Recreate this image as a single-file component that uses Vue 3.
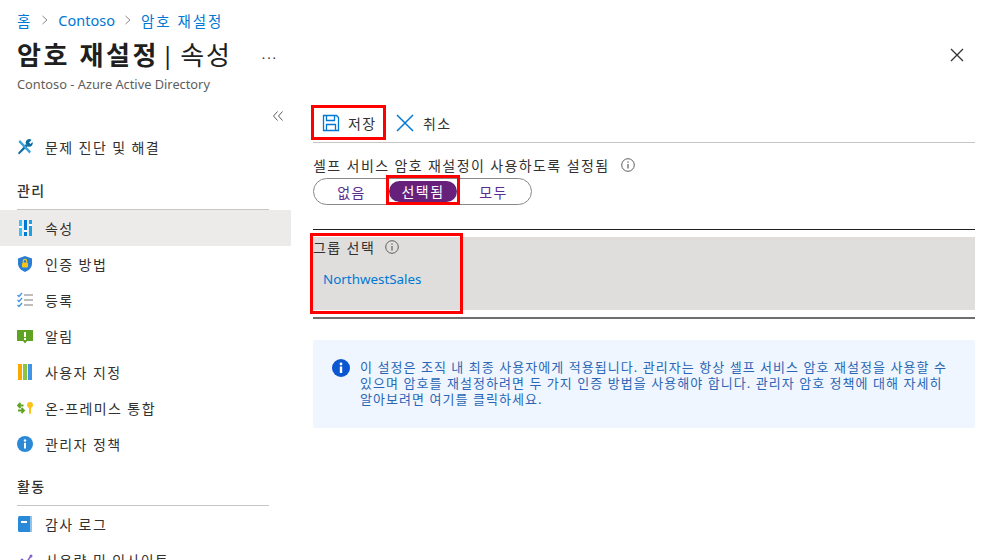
<script setup>
const crumbs = [
  { label: "Contoso", latin: true },
  { label: "암호 재설정" },
];
const manage = [
  { label: "속성", icon: "props", active: true },
  { label: "인증 방법", icon: "shield" },
  { label: "등록", icon: "check" },
  { label: "알림", icon: "alert" },
  { label: "사용자 지정", icon: "books" },
  { label: "온-프레미스 통합", icon: "sync" },
  { label: "관리자 정책", icon: "info" },
];
const activity = [
  { label: "감사 로그", icon: "log" },
  { label: "사용량 및 인사이트", icon: "chart" },
];
</script>

<template>
  <div class="page">
    <header class="head">
      <nav class="crumbs">
        <a>홈</a>
        <template v-for="c in crumbs" :key="c.label">
          <svg class="chev" width="8" height="10" viewBox="0 0 8 10"><path d="M1.5 1l4.5 4-4.500 4" fill="none" stroke="#8a8886" /></svg>
          <a :class="{ latin: c.latin }">{{ c.label }}</a>
        </template>
      </nav>
      <div class="title-row">
        <h1><b>암호 재설정</b><span class="pipe">|</span><span>속성</span></h1>
        <span class="more">...</span>
        <svg class="close" width="14" height="14" viewBox="0 0 14 14"><path d="M1 1l12 12M13 1L1 13" stroke="#323130" stroke-width="1.3" /></svg>
      </div>
      <div class="tenant">Contoso - Azure Active Directory</div>
    </header>

    <div class="body">
      <aside class="side">
        <div class="collapse">
          <svg width="10" height="10" viewBox="0 0 10 10"><path d="M4.500.5L.5 5l4 4.500M9.500.5L5.500 5l4 4.500" fill="none" stroke="#605e5c" /></svg>
        </div>
        <div class="item">
          <svg class="ic" width="16" height="16" viewBox="0 0 16 16">
            <path d="M1 14l8-9 2 2-9 8.500z" fill="#0b6a9f" />
            <path d="M3 1l11 11.500-1.500 2L1.500 3z" fill="#3aa0e0" />
            <path d="M9 5a3.500 3.500 0 0 1 5.500-4L12 3.500 13.500 5 15.500 3A3.500 3.500 0 0 1 11 7.500z" fill="#0b6a9f" />
          </svg>
          <span>문제 진단 및 해결</span>
        </div>
        <h2>관리</h2>
        <div v-for="m in manage" :key="m.label" class="item" :class="{ active: m.active }">
          <svg v-if="m.icon === 'props'" class="ic" width="16" height="16" viewBox="0 0 16 16">
            <rect x="2" y="0" width="3" height="16" fill="#32c5f4" /><rect x="2" y="6" width="3" height="2" fill="#fff" />
            <rect x="7" y="0" width="3" height="16" fill="#0078d4" /><rect x="7" y="10" width="3" height="2" fill="#fff" />
            <rect x="12" y="0" width="3" height="16" fill="#1e9fe0" /><rect x="12" y="4" width="3" height="2" fill="#fff" />
          </svg>
          <svg v-else-if="m.icon === 'shield'" class="ic" width="16" height="16" viewBox="0 0 16 16">
            <path d="M8 0l7 2.500v5c0 4-3 7-7 8.500-4-1.500-7-4.500-7-8.500v-5z" fill="#2a7fd5" />
            <rect x="5" y="6.500" width="6" height="5" rx="1" fill="#f5c518" />
            <path d="M6.300 6.500V5a1.700 1.700 0 0 1 3.400 0v1.500" fill="none" stroke="#f5c518" stroke-width="1.200" />
          </svg>
          <svg v-else-if="m.icon === 'check'" class="ic" width="16" height="16" viewBox="0 0 16 16">
            <path d="M.5 3l1.500 1.500L5 1M.5 8l1.500 1.500L5 6M.5 13l1.500 1.500L5 11" fill="none" stroke="#3f95e8" stroke-width="1.300" />
            <path d="M7 3h9M7 8h9M7 13h9" stroke="#a8a8a8" stroke-width="1.300" />
          </svg>
          <svg v-else-if="m.icon === 'alert'" class="ic" width="16" height="16" viewBox="0 0 16 16">
            <path d="M0 2h16v11H10l-2 2.500L6 13H0z" fill="#5ea422" />
            <rect x="7" y="4" width="2" height="5" fill="#fff" /><rect x="7" y="10" width="2" height="2" fill="#fff" />
          </svg>
          <svg v-else-if="m.icon === 'books'" class="ic" width="16" height="16" viewBox="0 0 16 16">
            <rect x="1" y="0" width="4" height="16" fill="#f8a800" />
            <rect x="6" y="0" width="4" height="16" fill="#8cc63f" />
            <rect x="11" y="0" width="4" height="16" fill="#3f95e8" />
          </svg>
          <svg v-else-if="m.icon === 'sync'" class="ic" width="16" height="16" viewBox="0 0 16 16">
            <path d="M1 5.500h5.500M3.500 3L1 5.500 3.500 8M1 10.500h6M4.500 8L7 10.500 4.500 13" fill="none" stroke="#5ea422" stroke-width="1.800" />
            <circle cx="13" cy="5" r="3" fill="#fcc419" /><path d="M12 7h2v6l-1 1.500-1-1.500z" fill="#fcc419" />
          </svg>
          <svg v-else-if="m.icon === 'info'" class="ic" width="16" height="16" viewBox="0 0 16 16">
            <circle cx="8" cy="8" r="8" fill="#2a8ad8" />
            <circle cx="8" cy="4.500" r="1.200" fill="#fff" /><rect x="7" y="6.800" width="2" height="5.700" fill="#fff" />
          </svg>
          <span>{{ m.label }}</span>
        </div>
        <h2 class="second">활동</h2>
        <div v-for="a in activity" :key="a.label" class="item">
          <svg v-if="a.icon === 'log'" class="ic" width="16" height="16" viewBox="0 0 16 16">
            <rect x="1" y="0" width="14" height="16" rx="1.500" fill="#2a8ad8" />
            <rect x="13" y="0" width="2" height="16" fill="#8dc4ee" />
            <rect x="4" y="5" width="6" height="2" fill="#fff" />
          </svg>
          <svg v-else class="ic" width="16" height="16" viewBox="0 0 16 16">
            <path d="M1 13l4-5 4 3 5-7" fill="none" stroke="#8661c5" stroke-width="1.500" />
            <circle cx="5" cy="8" r="1.500" fill="#8661c5" /><circle cx="9" cy="11" r="1.500" fill="#8661c5" /><circle cx="14" cy="4" r="1.500" fill="#8661c5" />
          </svg>
          <span>{{ a.label }}</span>
        </div>
      </aside>

      <main class="main">
        <div class="toolbar">
          <button class="tool mark-save">
            <svg width="18" height="18" viewBox="0 0 18 18">
              <path d="M1.500 1.500h13l2 2v13h-15z" fill="none" stroke="#0078d4" stroke-width="1.300" />
              <path d="M4.500 1.500v5h8v-5M4.500 16.500v-6h9v6" fill="none" stroke="#0078d4" stroke-width="1.300" />
            </svg>
            저장
          </button>
          <button class="tool cancel">
            <svg width="20" height="20" viewBox="0 0 20 20"><path d="M2 2l16 16M18 2L2 18" stroke="#0078d4" stroke-width="1.500" /></svg>
            취소
          </button>
        </div>
        <div class="field-label">
          셀프 서비스 암호 재설정이 사용하도록 설정됨
          <svg class="tip" width="14" height="14" viewBox="0 0 14 14"><circle cx="7" cy="7" r="6.300" fill="none" stroke="#605e5c" /><path d="M7 6v4.500M7 3.500v1.300" stroke="#605e5c" stroke-width="1.200" /></svg>
        </div>
        <div class="pills">
          <span class="pill">없음</span>
          <span class="pill on">선택됨</span>
          <span class="pill">모두</span>
        </div>
        <div class="group">
          <div class="group-mark">
            <div class="group-title">
              그룹 선택
              <svg class="tip" width="14" height="14" viewBox="0 0 14 14"><circle cx="7" cy="7" r="6.300" fill="none" stroke="#605e5c" /><path d="M7 6v4.500M7 3.500v1.300" stroke="#605e5c" stroke-width="1.200" /></svg>
            </div>
            <a class="group-link">NorthwestSales</a>
          </div>
        </div>
        <div class="notice">
          <svg class="notice-ic" width="18" height="18" viewBox="0 0 18 18">
            <circle cx="9" cy="9" r="9" fill="#0b57d0" />
            <circle cx="9" cy="5" r="1.400" fill="#fff" /><rect x="7.800" y="7.500" width="2.400" height="6.500" fill="#fff" />
          </svg>
          <p>이 설정은 조직 내 최종 사용자에게 적용됩니다. 관리자는 항상 셀프 서비스 암호 재설정을 사용할 수 있으며 암호를 재설정하려면 두 가지 인증 방법을 사용해야 합니다. 관리자 암호 정책에 대해 자세히 알아보려면 여기를 클릭하세요.</p>
        </div>
      </main>
    </div>
  </div>
</template>

<style>
html, body {
  background: #fff;
  overflow: hidden;
}
</style>

<style scoped>
.page {
  width: 992px;
  height: 560px;
  overflow: hidden;
  font-family: "Noto Sans", "Noto Sans CJK KR", sans-serif;
  font-size: 14px;
  letter-spacing: 1.4px;
  color: #323130;
}
.head {
  padding: 10px 0 0 17px;
  height: 100px;
  box-sizing: border-box;
}
.crumbs {
  display: flex;
  align-items: center;
  gap: 9px;
  height: 20px;
  font-size: 14.5px;
  letter-spacing: 2px;
  color: #0078d4;
}
.latin {
  letter-spacing: 0;
}
.title-row {
  display: flex;
  align-items: center;
  height: 38px;
  margin-top: 6px;
}
h1 {
  display: flex;
  align-items: center;
  margin: 0;
  font-size: 26px;
  font-weight: 400;
  line-height: 32px;
  letter-spacing: 1.8px;
  color: #201f1e;
  white-space: nowrap;
}
h1 b {
  font-weight: 700;
  letter-spacing: 2.6px;
}
.pipe {
  margin: 0 6px 0 2px;
  font-size: 24px;
  letter-spacing: 0;
}
.more {
  margin-left: 30px;
  padding-bottom: 2px;
  font-size: 13px;
  letter-spacing: 2px;
}
.close { margin-left: auto; margin-right: 28px; }
.tenant {
  font-size: 12.800px;
  line-height: 16px;
  letter-spacing: 0;
  color: #605e5c;
  margin-top: 2px;
}
.body {
  display: flex;
  height: 460px;
}
.side {
  width: 291px;
  flex: none;
}
.collapse {
  display: flex;
  justify-content: flex-end;
  box-sizing: border-box;
  height: 29px;
  padding: 11px 8px 0 0;
}
.item {
  display: flex;
  align-items: center;
  height: 36px;
  padding-left: 17px;
  gap: 12px;
  white-space: nowrap;
}
.item.active { background: #edebe9; }
.ic { flex: none; }
h2 {
  margin: 9px 22px 0 17px;
  height: 36px;
  box-sizing: border-box;
  padding-top: 8px;
  font-size: 14px;
  font-weight: 500;
  line-height: 18px;
  border-bottom: 1px solid #c8c6c4;
}
h2.second { margin-top: 8px; }
.main {
  margin-left: 22px;
  width: 662px;
  flex: none;
}
.toolbar {
  display: flex;
  align-items: center;
  height: 43px;
  padding-top: 3px;
  box-sizing: border-box;
  border-bottom: 1px solid #c8c6c4;
}
.tool {
  display: flex;
  align-items: center;
  gap: 8px;
  height: 35px;
  padding: 0;
  background: none;
  border: 0;
  font: inherit;
  letter-spacing: inherit;
  color: #323130;
}
.mark-save {
  box-sizing: border-box;
  width: 75px;
  margin-left: -2px;
  padding-left: 8px;
  border: 3px solid #f00;
  justify-content: flex-start;
}
.cancel { margin-left: 9px; }
.field-label {
  display: flex;
  align-items: center;
  gap: 11px;
  height: 18px;
  margin-top: 13px;
  white-space: nowrap;
}
.tip { flex: none; }
.pills {
  display: flex;
  align-items: center;
  box-sizing: border-box;
  height: 27px;
  width: 219px;
  margin-top: 4px;
  border: 1px solid #8a8886;
  border-radius: 14px;
}
.pill {
  flex: none;
  text-align: center;
  color: #5c2d91;
}
.pill:nth-child(1) { width: 75px; }
.pill:nth-child(2) { width: 68px; }
.pill:nth-child(3) { width: 73px; }
.pill.on {
  position: relative;
  height: 21px;
  line-height: 21px;
  background: #68217a;
  color: #fff;
  border-radius: 11px;
}
.pill.on::after {
  content: "";
  position: absolute;
  inset: -6px -3px -3px -3px;
  border: 3px solid #f00;
}
.group {
  position: relative;
  margin-top: 24px;
  height: 90px;
  box-sizing: border-box;
  border-top: 1px solid #201f1e;
  border-bottom: 2px solid #6e6e6e;
  padding: 7px 0;
  background: linear-gradient(#dfdedc, #dfdedc) content-box;
}
.group-mark {
  position: absolute;
  left: -3px;
  top: 3px;
  width: 153px;
  height: 81px;
  box-sizing: border-box;
  border: 3px solid #f00;
}
.group-title {
  display: flex;
  align-items: center;
  gap: 10px;
  height: 20px;
  margin-top: 1px;
  white-space: nowrap;
}
.group-link {
  display: block;
  margin: 13px 0 0 10px;
  font-size: 13.400px;
  letter-spacing: 0;
  color: #0078d4;
}
.notice {
  display: flex;
  margin-top: 21px;
  height: 88px;
  box-sizing: border-box;
  padding: 19px 24px 0 19px;
  background: #eff6ff;
  border-radius: 2px;
  gap: 10px;
}
.notice-ic { flex: none; }
.notice p {
  margin: 0;
  font-size: 13px;
  line-height: 16px;
  letter-spacing: 1.050px;
  color: #2a66b5;
}
</style>
